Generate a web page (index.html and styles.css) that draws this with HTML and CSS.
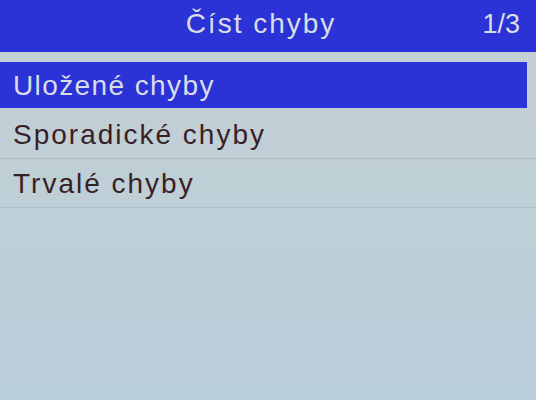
FILE: index.html
```html
<!DOCTYPE html>
<html lang="cs">
<head>
<meta charset="utf-8">
<link rel="stylesheet" href="styles.css">
</head>
<body>
<div class="screen">
  <header class="title-bar">
    <span class="title">Číst chyby</span>
    <span class="page">1/3</span>
  </header>
  <ul class="menu">
    <li class="item selected">Uložené chyby</li>
    <li class="item">Sporadické chyby</li>
    <li class="item">Trvalé chyby</li>
  </ul>
</div>
</body>
</html>
```
FILE: styles.css
```css
html, body {
  margin: 0;
  padding: 0;
}
body {
  width: 536px;
  height: 400px;
  overflow: hidden;
  font-family: "Liberation Sans", Arial, sans-serif;
}
.screen {
  width: 536px;
  height: 400px;
  background: linear-gradient(180deg, #c6d0d4 0%, #bfcfd6 45%, #b9cedb 100%);
  display: flex;
  flex-direction: column;
}
.title-bar {
  height: 52px;
  background: #2b33d6;
  display: grid;
  grid-template-columns: 1fr auto 1fr;
  align-items: center;
  color: #d9dde6;
  font-size: 28px;
  padding: 0 16px 4px 16px;
  box-sizing: border-box;
}
.title {
  grid-column: 2;
  padding-right: 14px;
  letter-spacing: 2px;
}
.page {
  grid-column: 3;
  justify-self: end;
  font-size: 27px;
}
.menu {
  list-style: none;
  margin: 10px 0 0 0;
  padding: 0;
}
.item {
  height: 49px;
  box-sizing: border-box;
  border-bottom: 1px solid #aebcc4;
  display: flex;
  align-items: center;
  padding-left: 13px;
  padding-top: 2px;
  font-size: 28px;
  letter-spacing: 2px;
  color: #3a1f26;
}
.item.selected {
  background: #2b33d6;
  color: #d9dde8;
  letter-spacing: 1.4px;
  margin-right: 9px;
  border-bottom: 2px solid #c4ccd2;
  height: 48px;
}
```
